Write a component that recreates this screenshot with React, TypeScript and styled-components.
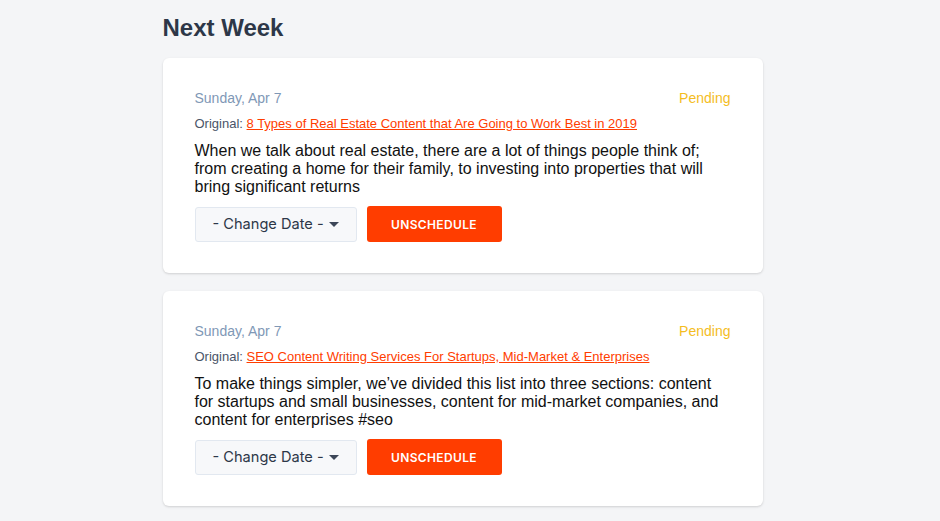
import React, { FC } from "react";
import styled, { createGlobalStyle } from "styled-components";

const GlobalStyle = createGlobalStyle`
    html, body {
        margin: 0;
        padding: 0;
        background: #f4f5f7;
        font-family: "Liberation Sans", Arial, sans-serif;
    }
`;

const Page = styled.div`
    display: flex;
    justify-content: center;
    width: calc(100% - 15px);
    padding: 12px 0 20px;
`;

const Column = styled.div`
    width: 600px;
    display: flex;
    flex-direction: column;
`;

const Heading = styled.h2`
    margin: 0 0 14px;
    font-size: 24px;
    line-height: 32px;
    font-weight: 700;
    color: #2d3748;
`;

const CardList = styled.div`
    display: flex;
    flex-direction: column;
    gap: 18px;
`;

const Card = styled.div`
    background: #ffffff;
    border-radius: 6px;
    box-shadow: 0 1px 3px rgba(0, 0, 0, 0.1), 0 1px 2px rgba(0, 0, 0, 0.06);
    padding: 30px 32px 31px;
    display: flex;
    flex-direction: column;
`;

const MetaRow = styled.div`
    display: flex;
    justify-content: space-between;
    align-items: center;
    font-size: 14px;
    line-height: 20px;
`;

const DateLabel = styled.span`
    color: #7f98b6;
`;

const Status = styled.span`
    color: #f4bd1f;
`;

const Original = styled.div`
    margin-top: 8px;
    font-size: 13px;
    line-height: 16px;
    color: #4a5568;

    a {
        color: #ff3d00;
        text-decoration: underline;
    }
`;

const Body = styled.p`
    margin: 10px 0 0;
    font-size: 16px;
    line-height: 18px;
    color: #111111;
`;

const Actions = styled.div`
    display: flex;
    align-items: center;
    gap: 10px;
    margin-top: 10px;
`;

const DateSelect = styled.div`
    box-sizing: border-box;
    width: 162px;
    height: 35px;
    display: flex;
    align-items: center;
    justify-content: space-between;
    padding: 0 17px 0 17px;
    background: #f7f8fa;
    border: 1px solid #e2e8f0;
    border-radius: 3px;
    font-family: Inter, "Liberation Sans", sans-serif;
    font-size: 14.6px;
    color: #2d3748;
`;

const Caret = styled.span`
    width: 0;
    height: 0;
    border-left: 5px solid transparent;
    border-right: 5px solid transparent;
    border-top: 5px solid #3c4658;
`;

const UnscheduleButton = styled.button`
    width: 135px;
    height: 36px;
    border: none;
    border-radius: 3px;
    background: #ff3d00;
    color: #ffffff;
    font-family: Inter, "Liberation Sans", sans-serif;
    font-size: 12px;
    font-weight: 600;
    letter-spacing: 0.35px;
    cursor: pointer;
`;

interface Post {
    date: string;
    status: string;
    title: string;
    text: string;
}

const posts: Post[] = [
    {
        date: "Sunday, Apr 7",
        status: "Pending",
        title: "8 Types of Real Estate Content that Are Going to Work Best in 2019",
        text: "When we talk about real estate, there are a lot of things people think of; from creating a home for their family, to investing into properties that will bring significant returns",
    },
    {
        date: "Sunday, Apr 7",
        status: "Pending",
        title: "SEO Content Writing Services For Startups, Mid-Market & Enterprises",
        text: "To make things simpler, we\u2019ve divided this list into three sections: content for startups and small businesses, content for mid-market companies, and content for enterprises #seo",
    },
];

const PostCard: FC<{ post: Post }> = ({ post }) => (
    <Card>
        <MetaRow>
            <DateLabel>{post.date}</DateLabel>
            <Status>{post.status}</Status>
        </MetaRow>
        <Original>
            Original: <a href="#">{post.title}</a>
        </Original>
        <Body>{post.text}</Body>
        <Actions>
            <DateSelect>
                <span>- Change Date -</span>
                <Caret />
            </DateSelect>
            <UnscheduleButton>UNSCHEDULE</UnscheduleButton>
        </Actions>
    </Card>
);

const App: FC = () => (
    <>
        <GlobalStyle />
        <Page>
            <Column>
                <Heading>Next Week</Heading>
                <CardList>
                    {posts.map((p, i) => (
                        <PostCard key={i} post={p} />
                    ))}
                </CardList>
            </Column>
        </Page>
    </>
);

export default App;
